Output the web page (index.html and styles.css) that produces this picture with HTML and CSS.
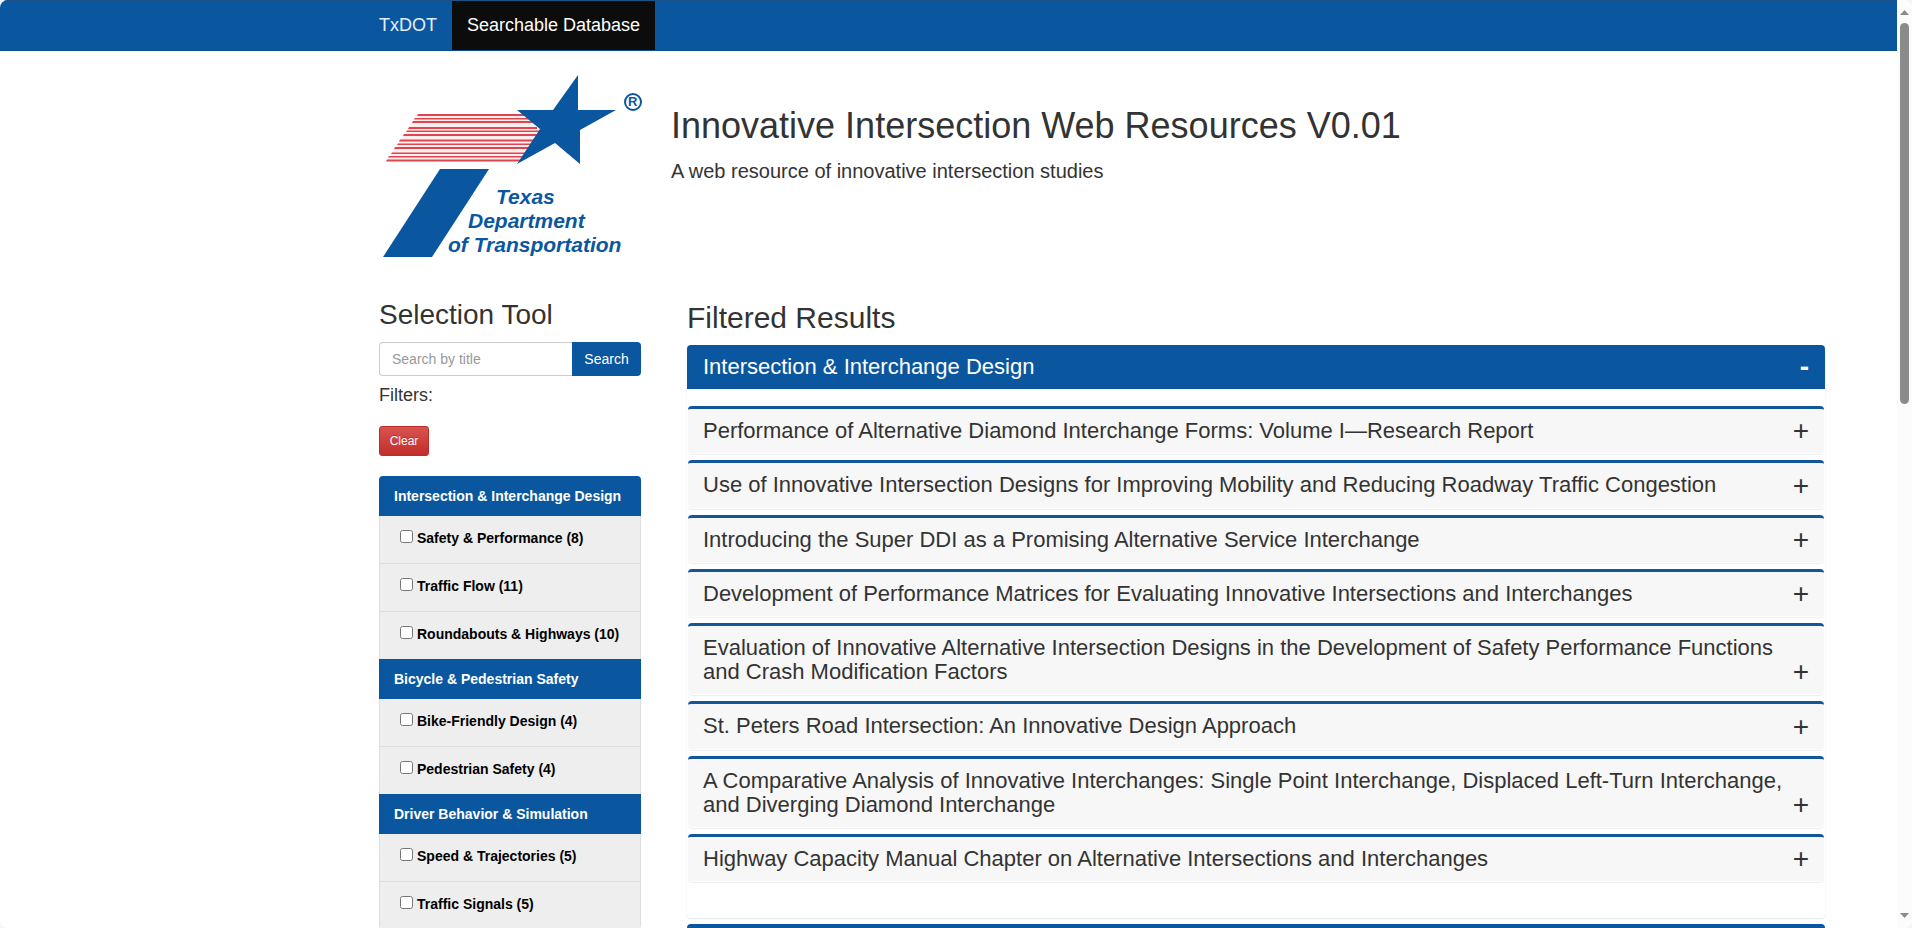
FILE: index.html
```html
<!DOCTYPE html>
<html lang="en">
<head>
<meta charset="utf-8">
<title>Innovative Intersection Web Resources</title>
<link rel="stylesheet" href="styles.css">
</head>
<body>
<div class="window">
  <div class="page">
    <nav class="navbar">
      <a class="nav-link" href="#">TxDOT</a>
      <a class="nav-link active" href="#">Searchable Database</a>
    </nav>

    <header class="masthead columns">
      <svg class="logo" viewBox="0 0 262 190" role="img" aria-label="Texas Department of Transportation">
        <path class="logo-haze" d="M39 39H150L160 54L142 86.500H7z"/>
        <g class="logo-stripes">
          <path d="M39 39H150V41H38zM36 43H152V44.500H35zM34 46H154V48H33zM30 52H158V54H29zM28 55.500H160V57H27zM25 59H161V61H24zM21 64.500H157V66.500H20zM19 68.500H155V70H18zM16 72H152V74H15zM13 77.500H148V79H12zM10 81H146V82.500H9zM8 84.500H142V86.500H7z"/>
        </g>
        <g class="logo-blue">
          <path d="M199 0V35H237L201 55V89L176 68L138 89L161 54L138 35H174z"/>
          <path d="M61 94H110L53 182H4z"/>
          <text x="117" y="129" class="logo-text">Texas</text>
          <text x="89" y="153" class="logo-text">Department</text>
          <text x="69" y="177" class="logo-text">of Transportation</text>
          <text x="249" y="31" class="logo-r">R</text>
        </g>
        <circle class="logo-ring" cx="254" cy="27" r="8"/>
      </svg>
      <div class="titles">
        <h1>Innovative Intersection Web Resources V0.01</h1>
        <p>A web resource of innovative intersection studies</p>
      </div>
    </header>

    <main class="columns content">
      <aside>
        <h2 class="side-title">Selection Tool</h2>
        <form class="search">
          <input type="text" placeholder="Search by title" aria-label="Search by title">
          <button type="button">Search</button>
        </form>
        <p class="filters-label">Filters:</p>
        <button class="clear" type="button">Clear</button>
        <div class="filters">
          <h3>Intersection &amp; Interchange Design</h3>
          <label><input type="checkbox"><span>Safety &amp; Performance (8)</span></label>
          <label><input type="checkbox"><span>Traffic Flow (11)</span></label>
          <label><input type="checkbox"><span>Roundabouts &amp; Highways (10)</span></label>
          <h3>Bicycle &amp; Pedestrian Safety</h3>
          <label><input type="checkbox"><span>Bike-Friendly Design (4)</span></label>
          <label><input type="checkbox"><span>Pedestrian Safety (4)</span></label>
          <h3>Driver Behavior &amp; Simulation</h3>
          <label><input type="checkbox"><span>Speed &amp; Trajectories (5)</span></label>
          <label><input type="checkbox"><span>Traffic Signals (5)</span></label>
        </div>
      </aside>

      <section class="results">
        <h2>Filtered Results</h2>
        <div class="group">
          <button class="group-head" type="button"><span>Intersection &amp; Interchange Design</span><b>-</b></button>
          <div class="group-body">
            <button class="item" type="button"><span>Performance of Alternative Diamond Interchange Forms: Volume I—Research Report</span><i>+</i></button>
            <button class="item" type="button"><span>Use of Innovative Intersection Designs for Improving Mobility and Reducing Roadway Traffic Congestion</span><i>+</i></button>
            <button class="item" type="button"><span>Introducing the Super DDI as a Promising Alternative Service Interchange</span><i>+</i></button>
            <button class="item" type="button"><span>Development of Performance Matrices for Evaluating Innovative Intersections and Interchanges</span><i>+</i></button>
            <button class="item" type="button"><span>Evaluation of Innovative Alternative Intersection Designs in the Development of Safety Performance Functions and Crash Modification Factors</span><i>+</i></button>
            <button class="item" type="button"><span>St. Peters Road Intersection: An Innovative Design Approach</span><i>+</i></button>
            <button class="item" type="button"><span>A Comparative Analysis of Innovative Interchanges: Single Point Interchange, Displaced Left-Turn Interchange, and Diverging Diamond Interchange</span><i>+</i></button>
            <button class="item" type="button"><span>Highway Capacity Manual Chapter on Alternative Intersections and Interchanges</span><i>+</i></button>
          </div>
        </div>
        <div class="group next"></div>
      </section>
    </main>
  </div>
  <div class="scrollbar" aria-hidden="true">
    <svg viewBox="0 0 9 5"><path d="M4.500 0L9 5H0z"/></svg>
    <div class="thumb"></div>
    <svg class="down" viewBox="0 0 9 5"><path d="M0 0H9L4.500 5z"/></svg>
  </div>
</div>
</body>
</html>
```

FILE: styles.css
```css
* { box-sizing: border-box; }

:root { --blue: #0b579f; --text: #333; }

body {
  margin: 0;
  background: #f3f6f8;
  color: var(--text);
  font: 14px/20px "Liberation Sans", Arial, sans-serif;
}

h1, h2, h3, p { margin: 0; font-weight: 400; }
button, input { font: inherit; }

.window {
  display: flex;
  height: 100vh;
  overflow: hidden;
  border-radius: 8px;
  background: #fff;
}

.page { flex: 1; min-width: 0; overflow: hidden; }

.navbar {
  display: flex;
  height: 51px;
  padding-left: 364px;
  background: var(--blue);
  border-top: 1px solid #1b5288;
  border-bottom: 1px solid #0b4f93;
}

.nav-link {
  padding: 14px 15px;
  color: #e4eef8;
  font-size: 18px;
  text-decoration: none;
}

.nav-link.active { background: #0c0c0c; color: #fff; }

.columns {
  display: grid;
  grid-template-columns: 262px 1fr;
  padding: 0 72px 0 379px;
}

.masthead { column-gap: 30px; padding-top: 24px; }

.logo { display: block; width: 262px; height: 190px; overflow: visible; }
.logo-haze { fill: #fdeff0; }
.logo-stripes { fill: #e0444c; }
.logo-blue { fill: var(--blue); }
.logo-text { font: italic bold 21px "Liberation Sans", Arial, sans-serif; }
.logo-r { font: bold 13px "Liberation Sans", Arial, sans-serif; }
.logo-ring { fill: none; stroke: var(--blue); stroke-width: 2; }

.titles { padding-top: 31px; }
.titles h1 { font-size: 36px; line-height: 40px; }
.titles p { margin-top: 13px; font-size: 20px; line-height: 24px; }

.content { column-gap: 46px; padding-top: 34px; }

.side-title { font-size: 28px; line-height: 32px; }

.search { display: flex; height: 34px; margin-top: 11px; }

.search input {
  flex: 1;
  min-width: 0;
  padding: 6px 12px;
  border: 1px solid #ccc;
  border-right: 0;
  border-radius: 4px 0 0 4px;
}

.search input::placeholder { color: #999; }

.search button {
  width: 69px;
  padding: 0;
  border: 0;
  border-radius: 0 4px 4px 0;
  background: var(--blue);
  color: #fff;
}

.filters-label { margin-top: 9px; font-size: 18px; }

.clear {
  display: block;
  width: 50px;
  height: 30px;
  margin-top: 21px;
  padding: 0;
  border: 1px solid #b92c28;
  border-radius: 3px;
  background: linear-gradient(#d9534f, #c12e2a);
  color: #fff;
  font-size: 12px;
  text-shadow: 0 -1px 0 rgba(0, 0, 0, .2);
}

.filters {
  margin-top: 20px;
  border-radius: 4px;
  overflow: hidden;
}

.filters h3 {
  padding: 10px 15px;
  background: var(--blue);
  color: #fff;
  font-size: 14px;
  font-weight: 700;
}

.filters label {
  display: flex;
  gap: 4px;
  height: 47px;
  padding: 12px 20px;
  border: solid #ddd;
  border-width: 0 1px;
  background: #eee;
  color: #000;
  font-weight: 700;
}

.filters label + label { height: 48px; border-top-width: 1px; }
.filters input { width: 13px; height: 13px; margin: 2px 0 0; }

.results h2 { padding-top: 2px; font-size: 30px; line-height: 34px; }

.group {
  margin-top: 10px;
  border-radius: 4px;
  box-shadow: 0 1px 2px rgba(0, 0, 0, .1);
}

.group-head, .item {
  display: flex;
  justify-content: space-between;
  align-items: flex-end;
  width: 100%;
  border: 0;
  text-align: left;
  font-size: 22px;
  line-height: 1.1;
}

.group-head {
  padding: 10px 16px;
  border-radius: 4px 4px 0 0;
  background: var(--blue);
  color: #fff;
}

.group-head b, .item i { font-size: 28px; line-height: 24px; }

.group-body {
  display: grid;
  gap: 7px;
  padding: 17px 1px 37px;
}

.item {
  padding: 10px 15px;
  border-top: 3px solid #14569a;
  border-radius: 4px;
  background: #f7f7f7;
  color: var(--text);
  box-shadow: 0 1px 1px #fff, 0 2px 1px #eee;
}

.item i { font-style: normal; }

.next { height: 44px; margin-top: 6px; background: var(--blue); }

.scrollbar {
  display: flex;
  flex-direction: column;
  align-items: center;
  width: 15px;
  padding: 10px 0;
  background: #fcfcfc;
}

.scrollbar svg { width: 9px; height: 5px; fill: #8b8b8b; }
.thumb { width: 9px; height: 42%; margin-top: 8px; border-radius: 5px; background: #8b8b8b; }
.down { margin-top: auto; }
```
